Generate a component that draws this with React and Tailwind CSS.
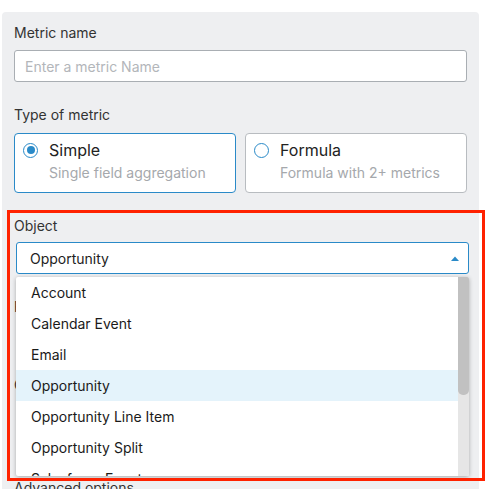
import React from 'react';

const options = [
  'Account',
  'Calendar Event',
  'Email',
  'Opportunity',
  'Opportunity Line Item',
  'Opportunity Split',
  'Salesforce Event',
];

const Radio = ({ checked }) => (
  <span className="flex h-[15px] w-[15px] shrink-0 items-center justify-center rounded-full border-[1.5px] border-[#2a8ac8] bg-white">
    {checked && <span className="h-[8px] w-[8px] rounded-full bg-[#2a8ac8]" />}
  </span>
);

const TypeCard = ({ title, subtitle, checked }) => (
  <div
    className={`flex h-[60px] w-[222px] flex-col rounded-[4px] border bg-white pl-[8px] pt-[6px] ${
      checked ? 'border-[#2a8ac8]' : 'border-[#b8bcc0]'
    }`}
  >
    <div className="flex items-center gap-[11px]">
      <Radio checked={checked} />
      <span className="text-[16px] leading-[20px] text-[#222]">{title}</span>
    </div>
    <span className="mt-[4px] pl-[26px] text-[14px] leading-[18px] text-[#a5a8ac]">{subtitle}</span>
  </div>
);

const Label = ({ children, className = '' }) => (
  <div className={`text-[14px] leading-[20px] text-[#333] ${className}`}>{children}</div>
);

const App = () => {
  return (
    <div className="relative h-[489px] w-[489px] overflow-hidden bg-white font-['Inter',sans-serif]">
      {/* Form panel */}
      <div className="ml-[2px] mt-[12px] h-[520px] w-[477px] rounded-t-[4px] bg-[#eeeff1] px-[12px] pt-[11px]">
        <Label>Metric name</Label>
        <div className="mt-[7px] flex h-[32px] w-[453px] items-center rounded-[3px] border border-[#a9aeb3] bg-white px-[10px] text-[14px] text-[#b3b6ba]">
          Enter a metric Name
        </div>

        <Label className="mt-[23px]">Type of metric</Label>
        <div className="mt-[8px] flex gap-[9px]">
          <TypeCard title="Simple" subtitle="Single field aggregation" checked />
          <TypeCard title="Formula" subtitle="Formula with 2+ metrics" />
        </div>

        <Label className="mt-[23px]">Object</Label>
        <div className="relative ml-[2px] mt-[6px] w-[453px]">
          <div className="flex h-[32px] items-center justify-between rounded-[3px] border border-[#2a8ac8] bg-white pl-[13px] pr-[9px] text-[14px] text-[#222]">
            <span>Opportunity</span>
            <svg width="8" height="5" viewBox="0 0 8 5">
              <path d="M0 5 L4 0.5 L8 5 Z" fill="#2a8ac8" />
            </svg>
          </div>

          {/* Open dropdown list */}
          <div className="absolute left-0 top-[35px] z-10 flex h-[199px] w-[453px] overflow-hidden rounded-[2px] bg-white shadow-[0_1px_4px_rgba(0,0,0,0.3)]">
            <div className="flex-1">
              {options.map((o) => (
                <div
                  key={o}
                  className={`flex h-[31px] items-center pl-[15px] text-[14px] text-[#1a1a1a] ${
                    o === 'Opportunity' ? 'bg-[#e4f3fb]' : ''
                  }`}
                >
                  {o}
                </div>
              ))}
            </div>
            <div className="w-[11px] bg-[#e6e6e6]">
              <div className="h-[118px] rounded-b-[5px] bg-[#c1c1c1]" />
            </div>
          </div>
        </div>

        {/* Fields hidden behind the open list */}
        <Label className="mt-[23px]">Field</Label>
        <div className="mt-[7px] h-[32px]" />
        <Label className="mt-[19px]">Group by</Label>
        <div className="mt-[7px] h-[32px]" />
        <Label className="mt-[44px]">Advanced options</Label>
      </div>

      {/* Annotation highlight */}
      <div className="pointer-events-none absolute left-[7px] top-[210px] z-20 h-[271px] w-[478px] border-[3px] border-[#ff2200]" />
    </div>
  );
};

export default App;
